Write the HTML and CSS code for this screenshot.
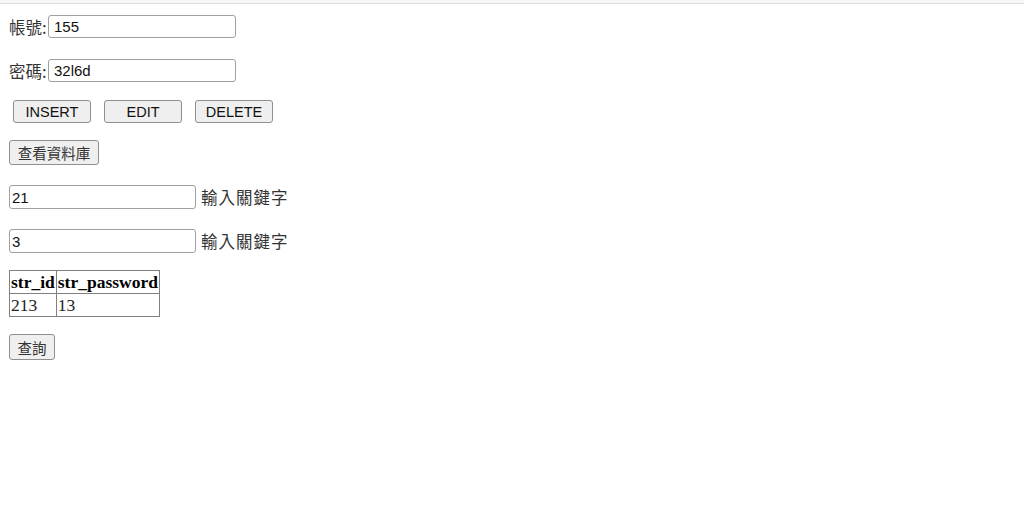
FILE: index.html
```html
<!DOCTYPE html>
<html>
<head>
    <title>帳號管理</title>
    <link rel="stylesheet" href="styles.css">
</head>
<body>
<div class="topline"></div>
<div class="page">
    <div class="field-row">
        <label class="label">帳號:</label><input class="text-input" type="text" value="155">
    </div>
    <div class="field-row field-row-2">
        <label class="label">密碼:</label><input class="text-input" type="text" value="32l6d">
    </div>
    <div class="actions">
        <button class="btn btn-action">INSERT</button>
        <button class="btn btn-action">EDIT</button>
        <button class="btn btn-action">DELETE</button>
    </div>
    <div class="block">
        <button class="btn btn-cjk btn-view">查看資料庫</button>
    </div>
    <div class="search-row">
        <input class="text-input wide" type="text" value="21"><span class="hint">輸入關鍵字</span>
    </div>
    <div class="search-row search-row-2">
        <input class="text-input wide" type="text" value="3"><span class="hint">輸入關鍵字</span>
    </div>
    <table class="result">
        <tr>
            <th>str_id</th>
            <th>str_password</th>
        </tr>
        <tr>
            <td>213</td>
            <td>13</td>
        </tr>
    </table>
    <div class="block">
        <button class="btn btn-cjk btn-query">查詢</button>
    </div>
</div>
</body>
</html>
```

FILE: styles.css
```css
body {
    margin: 0;
    background-color: #fff;
    font-family: "Liberation Sans", Arial, "Noto Sans CJK TC", sans-serif;
    color: #222;
}

.topline {
    height: 3px;
    border-bottom: 1px solid #dcdcdc;
    background-color: #f7f7f7;
}

.page {
    padding: 0 9px;
}

.field-row {
    display: flex;
    align-items: center;
    margin-top: 11px;
    height: 23px;
}

.field-row-2 {
    margin-top: 21px;
}

.label,
.hint {
    font-family: "Noto Sans CJK TC", sans-serif;
    font-size: 16.5px;
    color: #333;
    line-height: 20px;
}

.label {
    width: 39px;
}

.hint {
    margin-left: 5px;
    letter-spacing: 1px;
}

.text-input {
    box-sizing: border-box;
    width: 188px;
    height: 23px;
    padding: 0 5px;
    border: 1px solid #a0a0a0;
    border-radius: 3px;
    font-family: "Liberation Sans", Arial, sans-serif;
    font-size: 15px;
    color: #111;
    background-color: #fff;
}

.text-input.wide {
    width: 187px;
    height: 24px;
    padding: 0 2px;
}

.actions {
    display: flex;
    gap: 13px;
    padding-left: 4px;
    margin-top: 18px;
}

.btn {
    box-sizing: border-box;
    border: 1px solid #8f8f8f;
    border-radius: 3px;
    background-color: #efefef;
    color: #111;
    padding: 0;
}

.btn-action {
    width: 78px;
    height: 23px;
    font-family: "Liberation Sans", Arial, sans-serif;
    font-size: 14.5px;
}

.btn-cjk {
    font-family: "Noto Sans CJK TC", sans-serif;
    font-size: 14.5px;
    color: #333;
}

.block {
    margin-top: 17px;
    display: flex;
}

.btn-view {
    width: 90px;
    height: 25px;
}

.btn-query {
    width: 46px;
    height: 26px;
}

.search-row {
    display: flex;
    align-items: center;
    margin-top: 20px;
}

.search-row-2 {
    margin-top: 20px;
}

.result {
    margin-top: 17px;
    border-collapse: collapse;
    border: 1px solid #808080;
    font-family: "Liberation Serif", "Times New Roman", serif;
    font-size: 17.5px;
    color: #000;
}

.result th,
.result td {
    border: 1px solid #808080;
    padding: 2px 1px 1px 1px;
    text-align: left;
    line-height: 19px;
}

.result td {
    color: #222;
}
```
